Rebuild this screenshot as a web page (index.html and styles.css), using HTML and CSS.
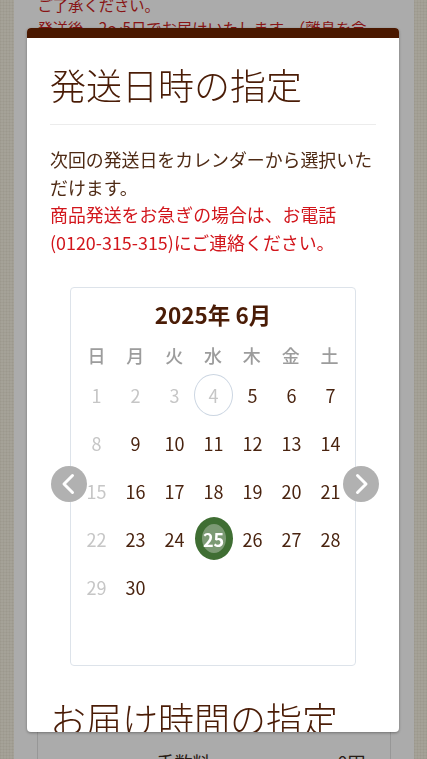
FILE: index.html
```html
<!DOCTYPE html>
<html lang="ja">
<head>
<meta charset="utf-8">
<title>発送日時の指定</title>
<link rel="stylesheet" href="styles.css">
</head>
<body>
<div class="page">
  <div class="notes">
    <p>ご了承ください。</p>
    <p>発送後、2～5日でお届けいたします。（離島を含</p>
  </div>
  <div class="summary">
    <div class="srow"><span class="slabel">商品合計</span><span class="sval">3,240円</span></div>
    <div class="srow"><span class="slabel">送料</span><span class="sval">0円</span></div>
    <div class="srow"><span class="slabel">手数料</span><span class="sval">0円</span></div>
  </div>
</div>

<div class="overlay"></div>

<div class="modal">
  <div class="modal-bar"></div>
  <div class="modal-body">
    <h2 class="modal-title">発送日時の指定</h2>
    <hr class="divider">
    <p class="lead">次回の発送日をカレンダーから選択いただけます。<br><span class="alert">商品発送をお急ぎの場合は、お電話(0120-315-315)にご連絡ください。</span></p>

    <div class="calendar">
      <div class="cal-title">2025年 6月</div>
      <div class="cal-week">
        <span>日</span><span>月</span><span>火</span><span>水</span><span>木</span><span>金</span><span>土</span>
      </div>
      <div class="cal-days">
        <div class="day off"><span>1</span></div>
        <div class="day off"><span>2</span></div>
        <div class="day off"><span>3</span></div>
        <div class="day off today"><span>4</span></div>
        <div class="day"><span>5</span></div>
        <div class="day"><span>6</span></div>
        <div class="day"><span>7</span></div>

        <div class="day off"><span>8</span></div>
        <div class="day"><span>9</span></div>
        <div class="day"><span>10</span></div>
        <div class="day"><span>11</span></div>
        <div class="day"><span>12</span></div>
        <div class="day"><span>13</span></div>
        <div class="day"><span>14</span></div>

        <div class="day off"><span>15</span></div>
        <div class="day"><span>16</span></div>
        <div class="day"><span>17</span></div>
        <div class="day"><span>18</span></div>
        <div class="day"><span>19</span></div>
        <div class="day"><span>20</span></div>
        <div class="day"><span>21</span></div>

        <div class="day off"><span>22</span></div>
        <div class="day"><span>23</span></div>
        <div class="day"><span>24</span></div>
        <div class="day selected"><span>25</span></div>
        <div class="day"><span>26</span></div>
        <div class="day"><span>27</span></div>
        <div class="day"><span>28</span></div>

        <div class="day off"><span>29</span></div>
        <div class="day"><span>30</span></div>
        <div class="day empty"></div>
        <div class="day empty"></div>
        <div class="day empty"></div>
        <div class="day empty"></div>
        <div class="day empty"></div>

        <div class="day empty"></div>
        <div class="day empty"></div>
        <div class="day empty"></div>
        <div class="day empty"></div>
        <div class="day empty"></div>
        <div class="day empty"></div>
        <div class="day empty"></div>
      </div>
      <button class="nav nav-prev" aria-label="前の月">
        <svg viewBox="0 0 36 36" width="36" height="36"><path d="M21.5 9.5 L13 18 L21.5 26.5" fill="none" stroke="#fff" stroke-width="3" stroke-linecap="round" stroke-linejoin="round"/></svg>
      </button>
      <button class="nav nav-next" aria-label="次の月">
        <svg viewBox="0 0 36 36" width="36" height="36"><path d="M14.5 9.5 L23 18 L14.5 26.5" fill="none" stroke="#fff" stroke-width="3" stroke-linecap="round" stroke-linejoin="round"/></svg>
      </button>
    </div>

    <h2 class="modal-title second">お届け時間の指定</h2>
  </div>
</div>
</body>
</html>
```

FILE: styles.css
```css
html, body {
  margin: 0;
  padding: 0;
}
body {
  width: 427px;
  height: 759px;
  overflow: hidden;
  font-family: "Noto Sans CJK JP", "Noto Sans", sans-serif;
  background-color: #f7f2e3;
  background-image:
    repeating-linear-gradient(0deg, rgba(120,110,80,0.06) 0 1px, transparent 1px 3px),
    repeating-linear-gradient(90deg, rgba(120,110,80,0.06) 0 1px, transparent 1px 3px);
}

/* page underneath */
.page {
  width: 400px;
  height: 766px;
  overflow: hidden;
  margin: -7px auto 0;
  background: #fff;
  box-sizing: border-box;
  padding: 0 24px;
}
.notes p {
  margin: 0;
  font-size: 15.3px;
  line-height: 23px;
  color: #cc1f22;
  white-space: nowrap;
}
.summary {
  margin: 613px -1px 0;
  border-left: 1px solid #e2e2e2;
  border-right: 1px solid #e2e2e2;
}
.srow {
  display: grid;
  grid-template-columns: 1fr 100px;
  height: 44px;
  align-items: center;
  font-size: 18px;
  color: #3a2a20;
}
.slabel {
  text-align: center;
  padding-left: 40px;
}
.sval {
  text-align: right;
  padding-right: 24px;
}

.overlay {
  position: fixed;
  inset: 0;
  background: rgba(0, 0, 0, 0.33);
}

/* modal */
.modal {
  position: fixed;
  left: 27px;
  top: 28px;
  width: 372px;
  height: 704px;
  background: #fff;
  border-radius: 4px;
  overflow: hidden;
  box-shadow: 0 1px 3px rgba(0, 0, 0, 0.35);
}
.modal-bar {
  height: 10px;
  background: #4a1800;
}
.modal-body {
  padding: 0 23px;
}
.modal-title {
  margin: 24px 0 0;
  font-size: 36px;
  line-height: 44px;
  font-weight: 300;
  color: #4a1c06;
  white-space: nowrap;
}
.modal-title.second {
  margin-top: 30px;
}
.divider {
  margin: 18px 0 0;
  border: 0;
  height: 1px;
  background: #ececec;
}
.lead {
  margin: 21px 0 0;
  font-size: 17.9px;
  line-height: 27.7px;
  color: #4e2a14;
}
.alert {
  color: #d2161c;
}

/* calendar */
.calendar {
  position: relative;
  width: 286px;
  box-sizing: border-box;
  margin: 30px auto 0;
  border: 1px solid #dde3ea;
  border-radius: 4px;
  padding: 11px 6px 6px;
}
.cal-title {
  text-align: center;
  font-size: 22.5px;
  font-weight: 700;
  line-height: 30px;
  color: #4a1c06;
}
.cal-week {
  margin-top: 10px;
  display: grid;
  grid-template-columns: repeat(7, 1fr);
  height: 32px;
  align-items: center;
  text-align: center;
  font-size: 18px;
  font-weight: 500;
  color: #9c9c9c;
}
.cal-days {
  display: grid;
  grid-template-columns: repeat(7, 1fr);
  grid-auto-rows: 48px;
}
.day {
  display: flex;
  align-items: center;
  justify-content: center;
  font-size: 18px;
  color: #4a2410;
}
.day span {
  display: flex;
  align-items: center;
  justify-content: center;
  box-sizing: border-box;
  width: 39px;
  height: 42px;
  border-radius: 50%;
}
.day.off {
  color: #c6c6c6;
}
.day.today span {
  border: 1px solid #ccd6e2;
}
.day.selected span {
  width: 38px;
  height: 43px;
  border: 7px solid #3f6e33;
  background: #7c9a74;
  color: #fff;
  font-weight: 700;
}

.nav {
  position: absolute;
  top: 178px;
  width: 36px;
  height: 36px;
  padding: 0;
  border: 0;
  border-radius: 50%;
  background: #b1b1b1;
  display: flex;
  align-items: center;
  justify-content: center;
}
.nav svg {
  display: block;
}
.nav-prev {
  left: -20px;
}
.nav-next {
  right: -24px;
}
```
